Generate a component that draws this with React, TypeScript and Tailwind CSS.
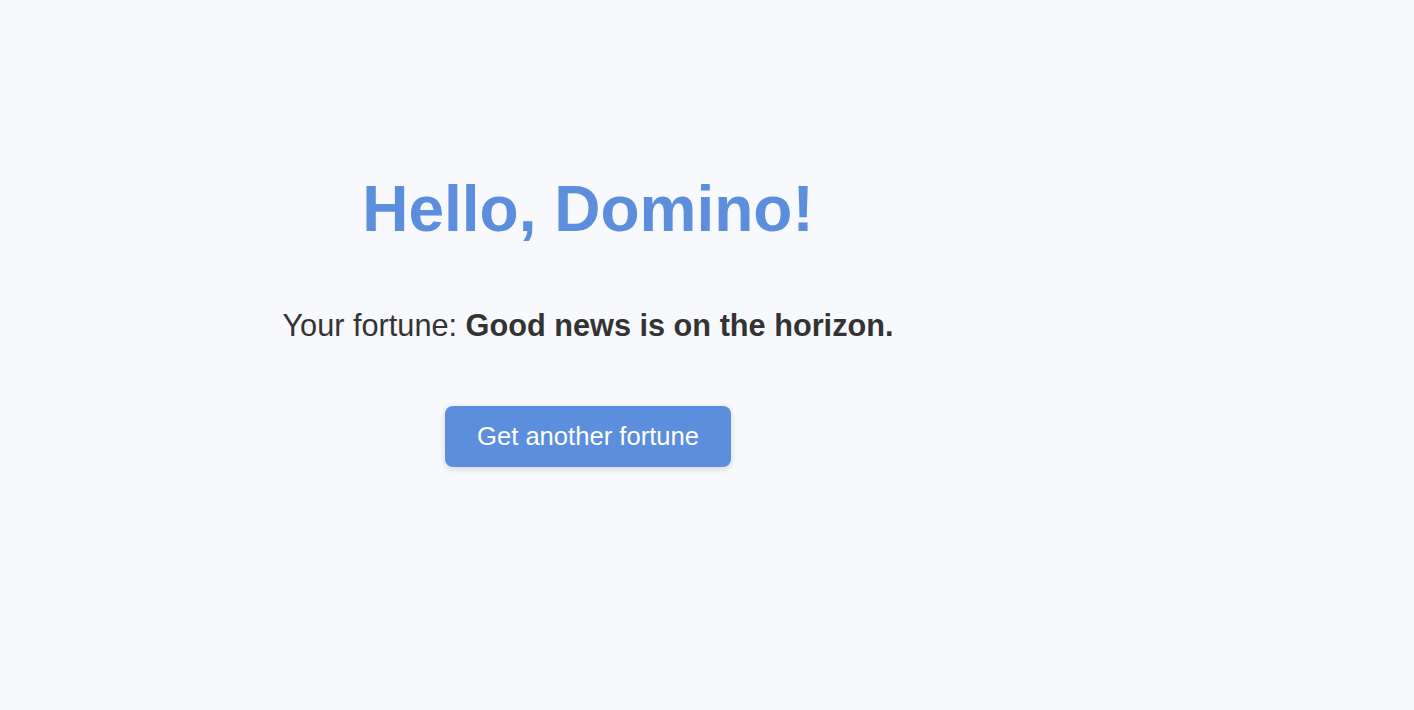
import { useState } from 'react'

const fortunes = [
  'Good news is on the horizon.',
  'A pleasant surprise is waiting for you.',
  'Your hard work will soon pay off.',
]

export default function App() {
  const [index, setIndex] = useState(0)

  return (
    <div className="min-h-screen bg-[#f7f9fd] font-['Liberation_Sans',Arial,sans-serif] text-[#333333]">
      <div className="w-[1176px] pt-[177px] flex flex-col items-center text-center">
        <h1 className="text-[64px] leading-none font-bold text-[#5b8edc]">Hello, Domino!</h1>

        <p className="mt-[70px] text-[30.7px] leading-none">
          Your fortune: <strong className="font-bold">{fortunes[index]}</strong>
        </p>

        <button
          onClick={() => setIndex((index + 1) % fortunes.length)}
          className="mt-[64px] px-8 py-4 rounded-lg bg-[#5b8edc] text-white text-[25.6px] leading-[29px] shadow-[0_2px_6px_rgba(0,0,0,0.15)] hover:bg-[#4a7fd0]"
        >
          Get another fortune
        </button>
      </div>
    </div>
  )
}
